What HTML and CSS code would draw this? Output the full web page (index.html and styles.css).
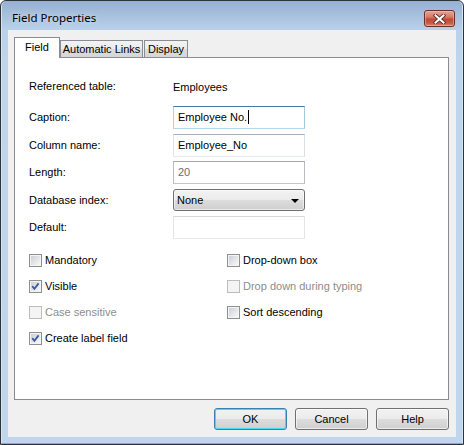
FILE: index.html
```
<!DOCTYPE html>
<html>
<head>
<meta charset="utf-8">
<link rel="stylesheet" href="styles.css">
</head>
<body>
<div class="window">
  <div class="titlebar">
    <span class="title">Field Properties</span>
    <div class="close">
      <svg width="13" height="10" viewBox="0 0 13 10">
        <path d="M2.5 1.5 L10.5 8.5 M10.5 1.5 L2.5 8.5" stroke="#5b2f2c" stroke-width="3.8" stroke-linecap="square" fill="none"/>
        <path d="M2.5 1.5 L10.5 8.5 M10.5 1.5 L2.5 8.5" stroke="#ffffff" stroke-width="2" stroke-linecap="square" fill="none"/>
      </svg>
    </div>
  </div>
  <div class="client">
    <div class="tabs">
      <div class="tab active">Field</div>
      <div class="tab t-auto">Automatic Links</div>
      <div class="tab t-display">Display</div>
    </div>
    <div class="panel">
      <div class="ref-row">
        <span class="label">Referenced table:</span>
        <span class="value">Employees</span>
      </div>
      <div class="form">
        <span class="label">Caption:</span>
        <div class="input focus">Employee No.<span class="caret"></span></div>
        <span class="label">Column name:</span>
        <div class="input">Employee_No</div>
        <span class="label">Length:</span>
        <div class="input readonly">20</div>
        <span class="label">Database index:</span>
        <div class="combo"><span>None</span><span class="arrow"></span></div>
        <span class="label">Default:</span>
        <div class="input empty"></div>
      </div>
      <div class="checks">
        <div class="check"><span class="box"></span>Mandatory</div>
        <div class="check"><span class="box"></span>Drop-down box</div>
        <div class="check"><span class="box"><svg width="11" height="11" viewBox="0 0 11 11"><path d="M2.2 5.2 L4.4 7.8 L8.6 2.4" stroke="#3f5a9a" stroke-width="1.8" fill="none"/></svg></span>Visible</div>
        <div class="check disabled"><span class="box"></span>Drop down during typing</div>
        <div class="check disabled"><span class="box"></span>Case sensitive</div>
        <div class="check"><span class="box"></span>Sort descending</div>
        <div class="check"><span class="box"><svg width="11" height="11" viewBox="0 0 11 11"><path d="M2.2 5.2 L4.4 7.8 L8.6 2.4" stroke="#3f5a9a" stroke-width="1.8" fill="none"/></svg></span>Create label field</div>
      </div>
    </div>
    <div class="buttons">
      <div class="btn default">OK</div>
      <div class="btn">Cancel</div>
      <div class="btn">Help</div>
    </div>
  </div>
</div>
</body>
</html>
```

FILE: styles.css
```
* { box-sizing: border-box; }
html, body { margin: 0; padding: 0; background: #ffffff; }
body {
  font-family: "Liberation Sans", Arial, sans-serif;
  font-size: 11px;
  color: #000;
}
.window {
  width: 464px;
  height: 445px;
  border: 1px solid #2f3337;
  border-radius: 6px 6px 0 0;
  background: linear-gradient(to bottom, #95b1d2 0px, #a9c2de 16px, #b9d1ea 29px, #bfd5ec 60px, #c0d6ed 100%);
  box-shadow: inset 0 -1px 0 #45c6ee, inset 1px 0 0 #d6e5f4, inset -1px 0 0 #d6e5f4;
  padding: 0 7px 7px 7px;
  display: flex;
  flex-direction: column;
}
.titlebar {
  height: 29px;
  display: flex;
  justify-content: space-between;
  align-items: flex-start;
  padding: 0 1px 0 4px;
}
.title {
  font-family: "Noto Sans", "Open Sans", sans-serif;
  font-size: 11.5px;
  line-height: 16px;
  margin-top: 9px;
  color: #000;
  text-shadow: 0 0 6px rgba(255,255,255,0.7);
}
.close {
  margin-top: 9px;
  width: 31px;
  height: 17px;
  border: 1px solid #6b2f2a;
  border-radius: 3px;
  background: linear-gradient(to bottom, #e8a493 0%, #d77a66 40%, #c24a35 55%, #c65a45 80%, #d98a70 100%);
  box-shadow: inset 0 0 0 1px rgba(255,200,190,0.45);
  display: flex;
  align-items: center;
  justify-content: center;
}
.close svg { display: block; }
.client {
  flex: 1;
  background: #f0f0f0;
  padding: 7px 7px 7px 6px;
  display: flex;
  flex-direction: column;
}
.tabs {
  height: 20px;
  display: flex;
  align-items: flex-end;
}
.tab {
  height: 17px;
  border: 1px solid #898c95;
  border-bottom: none;
  background: linear-gradient(to bottom, #f3f3f3 0%, #ebebeb 50%, #dddddd 51%, #d6d6d6 100%);
  text-align: center;
  line-height: 16px;
  position: relative;
}
.tab.active {
  width: 46px;
  height: 21px;
  margin-bottom: -1px;
  background: #ffffff;
  z-index: 1;
  line-height: 18px;
}
.t-auto { width: 83px; }
.t-display { width: 44px; margin-left: 1px; }
.panel {
  height: 343px;
  border: 1px solid #898c95;
  background: #ffffff;
  padding: 17px 0 0 14px;
}
.ref-row {
  display: grid;
  grid-template-columns: 144px 132px;
  height: 23px;
  align-items: center;
  margin-bottom: 8px;
}
.form {
  display: grid;
  grid-template-columns: 144px 132px;
  grid-auto-rows: 23px;
  row-gap: 4.5px;
  align-items: center;
}
.label { line-height: 13px; }
.input {
  height: 23px;
  border: 1px solid;
  border-color: #abadb3 #dbdfe6 #e3e9ef #e2e3ea;
  background: #fff;
  padding: 0 4px;
  line-height: 21px;
  white-space: nowrap;
}
.input.focus { border-color: #3d7bad #a4c9e3 #b7d9ed #b5cfe7; }
.input.readonly { border-color: #a5a7ad #b9bbc0 #c4c6cb #b9bbc0; color: #6d6d6d; }
.input.empty { border-color: #d5d8dd #e2e4e8 #e6e9ed #e2e4e8; }
.caret {
  display: inline-block;
  width: 1px;
  height: 14px;
  background: #000;
  vertical-align: -3px;
  margin-left: 1px;
}
.combo {
  height: 22px;
  border: 1px solid #707070;
  border-radius: 3px;
  background: linear-gradient(to bottom, #f2f2f2 0%, #ebebeb 50%, #dddddd 50%, #cfcfcf 100%);
  box-shadow: inset 0 0 0 1px rgba(255,255,255,0.55);
  display: flex;
  align-items: center;
  justify-content: space-between;
  padding: 0 5px 0 3px;
}
.arrow {
  width: 0;
  height: 0;
  border-left: 4px solid transparent;
  border-right: 4px solid transparent;
  border-top: 4px solid #000;
  margin-top: 1px;
}
.checks {
  margin-top: 8px;
  display: grid;
  grid-template-columns: 198px 1fr;
  grid-auto-rows: 26px;
  align-items: center;
}
.check {
  display: flex;
  align-items: center;
  gap: 3px;
  line-height: 13px;
}
.box {
  width: 13px;
  height: 13px;
  border: 1px solid #8e8f8f;
  background: #f4f4f4;
  position: relative;
  flex: none;
  display: flex;
  align-items: center;
  justify-content: center;
}
.box::before {
  content: "";
  position: absolute;
  left: 1px; top: 1px; right: 1px; bottom: 1px;
  background: linear-gradient(135deg, #cbcfd5 0%, #e4e6e9 55%, #f7f7f7 100%);
}
.box svg { position: relative; display: block; }
.check.disabled { color: #8d8d8d; }
.check.disabled .box { border-color: #bcbcbc; }
.check.disabled .box::before { background: #f4f4f4; }
.buttons {
  margin-top: 8px;
  display: flex;
  justify-content: flex-end;
  gap: 8px;
  padding-right: 0;
}
.btn {
  width: 73px;
  height: 22px;
  border: 1px solid #707070;
  border-radius: 3px;
  background: linear-gradient(to bottom, #f2f2f2 0%, #ebebeb 50%, #dddddd 50%, #cfcfcf 100%);
  box-shadow: inset 0 0 0 1px rgba(255,255,255,0.6);
  text-align: center;
  line-height: 20px;
}
.btn.default {
  border-color: #3c7fb1;
  box-shadow: inset 0 0 0 1px #48d7fb;
}
```
